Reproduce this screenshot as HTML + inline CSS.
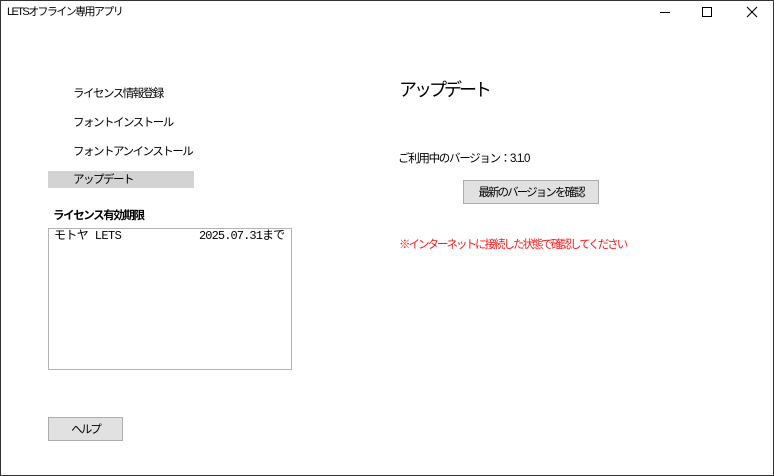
<!DOCTYPE html>
<html><head><meta charset="utf-8"><style>
*{margin:0;padding:0;box-sizing:border-box}
body{width:774px;height:476px;background:#fff;position:relative;overflow:hidden;font-family:"Liberation Sans","Noto Sans CJK JP",sans-serif;color:#000;font-size:11.5px}
.frame{position:absolute;left:0;top:0;width:774px;height:476px;border:1px solid #333}
.a{position:absolute;white-space:nowrap;line-height:1;letter-spacing:-1.5px}
.btn{position:absolute;background:#e1e1e1;border:1px solid #adadad;font-size:11.5px;display:flex;align-items:center;justify-content:center;letter-spacing:-1.9px}
</style></head><body>
<div class="frame"></div>
<div class="a" style="left:7px;top:7px;font-size:11px;letter-spacing:-1.6px">LETSオフライン専用アプリ</div>
<svg class="a" style="left:650px;top:0" width="124" height="26">
<line x1="10" y1="12.5" x2="20" y2="12.5" stroke="#000"/>
<rect x="52.5" y="7.5" width="9" height="9" fill="none" stroke="#000"/>
<path d="M97 7L107 17M107 7L97 17" stroke="#000" stroke-width="1.1"/>
</svg>
<div class="a" style="left:48px;top:171px;width:146px;height:17px;background:#d3d3d3"></div>
<div class="a" style="left:73px;top:89px">ライセンス情報登録</div>
<div class="a" style="left:73px;top:118px">フォントインストール</div>
<div class="a" style="left:73px;top:147px">フォントアンインストール</div>
<div class="a" style="left:73px;top:175px">アップデート</div>
<div class="a" style="left:53px;top:211px;font-weight:bold;letter-spacing:-1.4px">ライセンス有効期限</div>
<div class="a" style="left:48px;top:228px;width:244px;height:142px;border:1px solid #b4b4b4"></div>
<div class="a" style="left:54px;top:230px;font-family:'Liberation Mono','Noto Sans CJK JP',monospace;font-size:12px;letter-spacing:-0.6px">モトヤ LETS</div>
<div class="a" style="left:199px;top:230px;font-family:'Liberation Mono','Noto Sans CJK JP',monospace;font-size:12px;letter-spacing:-0.9px">2025.07.31まで</div>
<div class="btn" style="left:48px;top:417px;width:75px;height:24px">ヘルプ</div>
<div class="a" style="left:399px;top:81px;font-size:18px;letter-spacing:-3px">アップデート</div>
<div class="a" style="left:398px;top:154px;letter-spacing:-1.3px">ご利用中のバージョン：3.1.0</div>
<div class="btn" style="left:463px;top:180px;width:136px;height:24px">最新のバージョンを確認</div>
<div class="a" style="left:399px;top:240px;color:#ff1a1a;letter-spacing:-2px">※インターネットに接続した状態で確認してください</div>
</body></html>
